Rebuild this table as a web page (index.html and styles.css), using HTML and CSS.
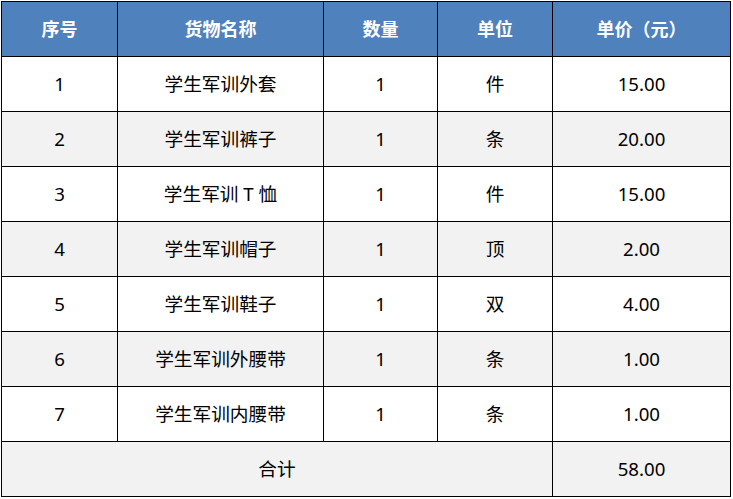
FILE: index.html
```html
<!DOCTYPE html>
<html lang="zh-CN">
<head>
<meta charset="utf-8">
<link rel="stylesheet" href="styles.css">
</head>
<body>
<table class="goods">
  <colgroup>
    <col class="c1"><col class="c2"><col class="c3"><col class="c4"><col class="c5">
  </colgroup>
  <thead>
    <tr><th>序号</th><th>货物名称</th><th>数量</th><th>单位</th><th>单价（元）</th></tr>
  </thead>
  <tbody>
    <tr><td>1</td><td>学生军训外套</td><td>1</td><td>件</td><td>15.00</td></tr>
    <tr class="alt"><td>2</td><td>学生军训裤子</td><td>1</td><td>条</td><td>20.00</td></tr>
    <tr><td>3</td><td>学生军训 T 恤</td><td>1</td><td>件</td><td>15.00</td></tr>
    <tr class="alt"><td>4</td><td>学生军训帽子</td><td>1</td><td>顶</td><td>2.00</td></tr>
    <tr><td>5</td><td>学生军训鞋子</td><td>1</td><td>双</td><td>4.00</td></tr>
    <tr class="alt"><td>6</td><td>学生军训外腰带</td><td>1</td><td>条</td><td>1.00</td></tr>
    <tr><td>7</td><td>学生军训内腰带</td><td>1</td><td>条</td><td>1.00</td></tr>
    <tr class="alt"><td colspan="4">合计</td><td>58.00</td></tr>
  </tbody>
</table>
</body>
</html>
```
FILE: styles.css
```css
html, body {
  margin: 0;
  padding: 0;
  background: #ffffff;
}
body {
  padding: 1px 0 0 1px;
  font-family: "Noto Sans", "Noto Sans CJK SC", sans-serif;
  color: #000;
}
.goods {
  border-collapse: collapse;
  table-layout: fixed;
  width: 729px;
}
.c1 { width: 116px; }
.c2 { width: 206px; }
.c3 { width: 114px; }
.c4 { width: 115px; }
.c5 { width: 178px; }
.goods th,
.goods td {
  border: 1.5px solid #000;
  height: 54px;
  padding: 0;
  text-align: center;
  vertical-align: middle;
  font-size: 18.67px;
  line-height: 1;
}
.goods th {
  background: #4f81bd;
  color: #ffffff;
  font-weight: bold;
  font-size: 18px;
}
.goods td {
  font-weight: normal;
}
.goods tr.alt td {
  background: #f2f2f2;
}
```
